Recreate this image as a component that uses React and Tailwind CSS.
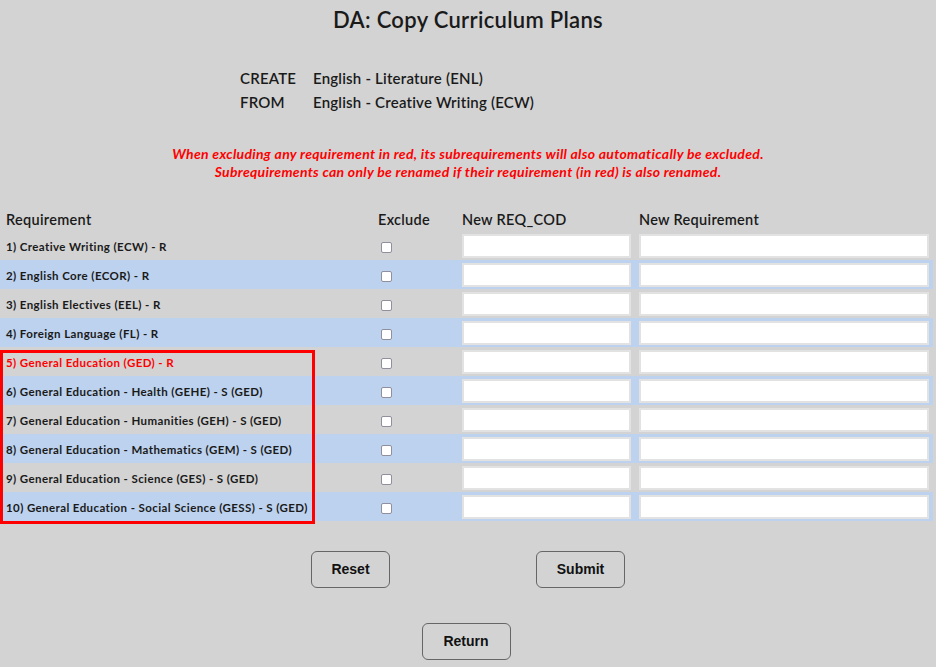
const rows = [
  { label: "1) Creative Writing (ECW) - R", red: false },
  { label: "2) English Core (ECOR) - R", red: false },
  { label: "3) English Electives (EEL) - R", red: false },
  { label: "4) Foreign Language (FL) - R", red: false },
  { label: "5) General Education (GED) - R", red: true },
  { label: "6) General Education - Health (GEHE) - S (GED)", red: false },
  { label: "7) General Education - Humanities (GEH) - S (GED)", red: false },
  { label: "8) General Education - Mathematics (GEM) - S (GED)", red: false },
  { label: "9) General Education - Science (GES) - S (GED)", red: false },
  { label: "10) General Education - Social Science (GESS) - S (GED)", red: false },
];

const Row = ({ label, red, index }) => (
  <div
    className={`flex h-[29px] items-center ${
      index % 2 === 1 ? "bg-[#bdd2ee]" : "bg-[#d3d3d3]"
    }`}
  >
    <div
      className={`w-[376px] pl-[6px] pt-[3px] text-[11.5px] font-bold tracking-[0.4px] ${
        red ? "text-[#ff0000]" : "text-[#1a1a1a]"
      }`}
    >
      {label}
    </div>
    <div className="w-[82px] pl-[5px] pt-[3px] flex items-center">
      <input
        type="checkbox"
        className="h-[11px] w-[11px] appearance-none rounded-[2px] border border-[#8f8f9d] bg-white"
      />
    </div>
    <div className="w-[177px] pl-[4px]">
      <input
        type="text"
        className="block h-[24px] w-[169px] border-2 border-[#e2e2e2] bg-white outline-none"
      />
    </div>
    <div className="pl-[4px]">
      <input
        type="text"
        className="block h-[24px] w-[290px] border-2 border-[#e2e2e2] bg-white outline-none"
      />
    </div>
  </div>
);

export default function App() {
  return (
    <div className="min-h-[667px] w-[936px] bg-[#d3d3d3] font-['Lato',sans-serif] text-[#1a1a1a]">
      <h1 className="pt-[6px] text-center text-[22px] leading-[28px] font-semibold tracking-[0.3px]">
        DA: Copy Curriculum Plans
      </h1>

      <div className="mt-[32px] pl-[240px] text-[15px] font-semibold leading-[24px] tracking-[0.2px]">
        <div className="flex">
          <span className="w-[73px]">CREATE</span>
          <span>English - Literature (ENL)</span>
        </div>
        <div className="flex">
          <span className="w-[73px]">FROM</span>
          <span>English - Creative Writing (ECW)</span>
        </div>
      </div>

      <div className="mt-[31px] text-center text-[14px] font-bold italic leading-[18px] tracking-[0.3px] text-[#ff0000]">
        <p>When excluding any requirement in red, its subrequirements will also automatically be excluded.</p>
        <p>Subrequirements can only be renamed if their requirement (in red) is also renamed.</p>
      </div>

      <div className="w-[933px]">
        <div className="mt-[29px] flex h-[20px] items-center text-[14.5px] font-semibold tracking-[0.3px]">
          <div className="w-[376px] pl-[6px]">Requirement</div>
          <div className="w-[82px] pl-[2px]">Exclude</div>
          <div className="w-[177px] pl-[4px]">New REQ_COD</div>
          <div className="pl-[4px]">New Requirement</div>
        </div>

        <div className="relative mt-[1px]">
          {rows.map((r, i) => (
            <Row key={i} index={i} label={r.label} red={r.red} />
          ))}
          <div className="pointer-events-none absolute left-0 top-[119px] h-[174px] w-[315px] border-[3px] border-[#ff0000]" />
        </div>
      </div>

      <div className="mt-[30px] flex justify-center gap-[146px] font-['Liberation_Sans',sans-serif] text-[14px] font-bold text-[#111]">
        <button className="h-[37px] w-[79px] rounded-[6px] border border-[#666]">Reset</button>
        <button className="h-[37px] w-[89px] rounded-[6px] border border-[#666]">Submit</button>
      </div>

      <div className="mt-[35px] flex justify-center pr-[4px] font-['Liberation_Sans',sans-serif] text-[14px] font-bold text-[#111]">
        <button className="h-[37px] w-[89px] rounded-[6px] border border-[#666]">Return</button>
      </div>
    </div>
  );
}
